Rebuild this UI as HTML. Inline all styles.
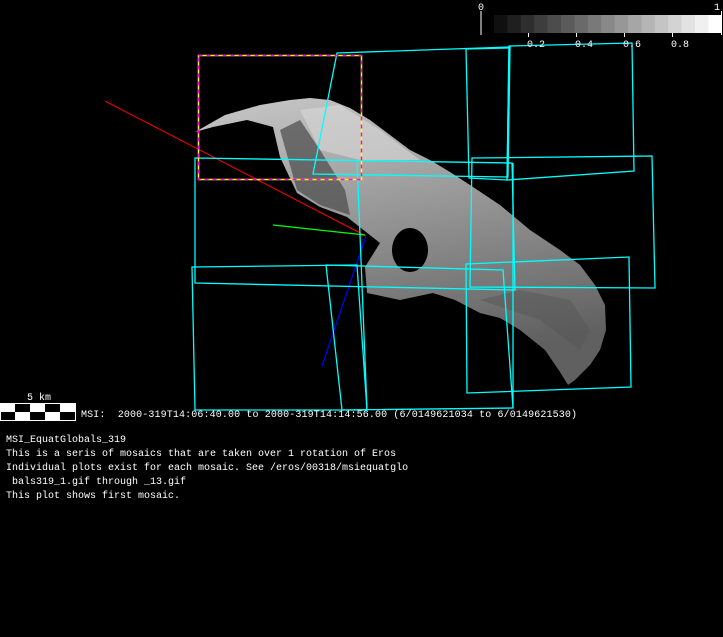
<!DOCTYPE html>
<html><head><meta charset="utf-8"><style>
html,body{margin:0;padding:0;background:#000;width:723px;height:637px;overflow:hidden}
svg{display:block}
text{font-family:"Liberation Mono","DejaVu Sans Mono",monospace;fill:#fff;font-size:10px}
</style></head><body>
<svg width="723" height="637" viewBox="0 0 723 637" xmlns="http://www.w3.org/2000/svg">
<defs>
<linearGradient id="g" x1="0" y1="0" x2="0.25" y2="1">
<stop offset="0" stop-color="#c8c8c8"/>
<stop offset="0.45" stop-color="#9a9a9a"/>
<stop offset="1" stop-color="#606060"/>
</linearGradient>
</defs>
<rect width="723" height="637" fill="#000"/>
<!-- asteroid -->
<path d="M195,132 L225,115 L260,105 L290,100 L310,98 L330,100 L350,108 L370,120 L390,135 L410,150 L430,160 L450,172 L470,185 L500,205 L530,230 L560,250 L580,265 L595,285 L605,305 L606,330 L600,350 L590,365 L575,380 L568,385 L560,372 L545,350 L520,330 L500,318 L480,313 L455,300 L433,293 L400,300 L367,293 L365,267 L380,243 L347,217 L320,207 L297,193 L280,157 L273,127 L247,120 L213,127 Z" fill="url(#g)"/>
<path d="M300,110 L340,105 L380,130 L420,160 L360,160 L320,150 Z" fill="#d8d8d8" opacity="0.6"/>
<path d="M280,130 L300,120 L320,150 L345,190 L350,215 L320,205 L297,190 Z" fill="#4a4a4a" opacity="0.7"/>
<path d="M480,300 L540,320 L580,350 L590,330 L570,300 L520,290 Z" fill="#555" opacity="0.5"/>
<ellipse cx="410" cy="250" rx="18" ry="22" fill="#000"/>
<!-- axes lines -->
<line x1="105" y1="101" x2="366" y2="236" stroke="#f00" stroke-width="1"/>
<line x1="273" y1="225" x2="365" y2="235" stroke="#0f0" stroke-width="1.2"/>
<line x1="366" y1="236" x2="322" y2="366" stroke="#00f" stroke-width="1.2"/>
<!-- cyan frames -->
<g fill="none" stroke="#0ff" stroke-width="1.3">
<polygon points="337,53 510,47 508,177 313,174"/>
<polygon points="466,49 509,48 507,180 469,178"/>
<polygon points="509,46 632,43 634,171 507,180"/>
<polygon points="195,158 512,163 515,290 195,283"/>
<polygon points="472,158 652,156 655,288 470,287"/>
<polygon points="192,267 357,265 367,410 195,410"/>
<polygon points="326,265 503,270 513,408 342,410"/>
<polygon points="466,264 629,257 631,387 467,393"/>
<line x1="357" y1="160" x2="367" y2="410"/>
<line x1="513" y1="163" x2="513" y2="408"/>
</g>
<!-- dashed box -->
<rect x="198.5" y="55.5" width="163" height="124" fill="none" stroke="#ff0" stroke-width="1.5"/>
<rect x="198.5" y="55.5" width="163" height="124" fill="none" stroke="#f0f" stroke-width="1.5" stroke-dasharray="4 4"/>
<!-- colorbar -->
<g>
<rect x="494" y="15" width="14" height="18" fill="#101010"/>
<rect x="507.4" y="15" width="14" height="18" fill="#1f1f1f"/>
<rect x="520.8" y="15" width="14" height="18" fill="#2e2e2e"/>
<rect x="534.2" y="15" width="14" height="18" fill="#3d3d3d"/>
<rect x="547.6" y="15" width="14" height="18" fill="#4c4c4c"/>
<rect x="561" y="15" width="14" height="18" fill="#5b5b5b"/>
<rect x="574.4" y="15" width="14" height="18" fill="#6a6a6a"/>
<rect x="587.8" y="15" width="14" height="18" fill="#797979"/>
<rect x="601.2" y="15" width="14" height="18" fill="#888"/>
<rect x="614.6" y="15" width="14" height="18" fill="#979797"/>
<rect x="628" y="15" width="14" height="18" fill="#a6a6a6"/>
<rect x="641.4" y="15" width="14" height="18" fill="#b5b5b5"/>
<rect x="654.8" y="15" width="14" height="18" fill="#c4c4c4"/>
<rect x="668.2" y="15" width="14" height="18" fill="#d3d3d3"/>
<rect x="681.6" y="15" width="14" height="18" fill="#e2e2e2"/>
<rect x="695" y="15" width="14" height="18" fill="#f0f0f0"/>
<rect x="708.4" y="15" width="13.6" height="18" fill="#fff"/>
<line x1="481" y1="11" x2="481" y2="35" stroke="#fff"/>
<line x1="721.5" y1="11" x2="721.5" y2="35" stroke="#fff"/>
<g stroke="#fff"><line x1="528.5" y1="33" x2="528.5" y2="37"/><line x1="576.5" y1="33" x2="576.5" y2="37"/><line x1="624.5" y1="33" x2="624.5" y2="37"/><line x1="672.5" y1="33" x2="672.5" y2="37"/></g>
<text x="478" y="10">0</text>
<text x="714" y="10">1</text>
<text x="527" y="47">0.2</text>
<text x="575" y="47">0.4</text>
<text x="623" y="47">0.6</text>
<text x="671" y="47">0.8</text>
</g>
<!-- scale bar -->
<rect x="0.5" y="403.5" width="75" height="17" fill="#000" stroke="#fff"/>
<g fill="#fff">
<rect x="0" y="403" width="15" height="9"/><rect x="30" y="403" width="15" height="9"/><rect x="60" y="403" width="15" height="9"/>
<rect x="15" y="412" width="15" height="9"/><rect x="45" y="412" width="15" height="9"/>
</g>
<text x="27" y="400">5 km</text>
<text x="81" y="417" xml:space="preserve" textLength="496" lengthAdjust="spacing">MSI:  2000-319T14:06:40.00 to 2000-319T14:14:56.00 (6/0149621034 to 6/0149621530)</text>
<text x="6" y="442">MSI_EquatGlobals_319</text>
<text x="6" y="456">This is a seris of mosaics that are taken over 1 rotation of Eros</text>
<text x="6" y="470">Individual plots exist for each mosaic. See /eros/00318/msiequatglo</text>
<text x="6" y="484" xml:space="preserve"> bals319_1.gif through _13.gif</text>
<text x="6" y="498">This plot shows first mosaic.</text>
</svg>
</body></html>
